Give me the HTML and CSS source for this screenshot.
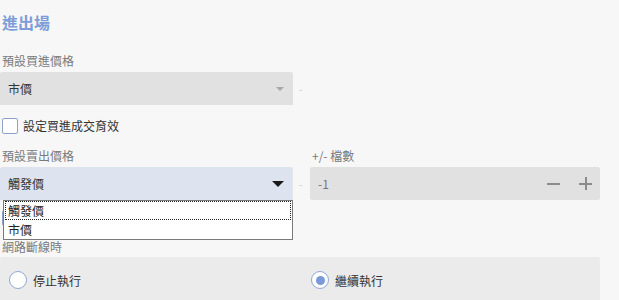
FILE: index.html
```html
<!DOCTYPE html>
<html lang="zh-Hant">
<head>
    <meta charset="UTF-8">
    <meta name="viewport" content="width=device-width, initial-scale=1.0">
    <title>進出場</title>
    <link rel="stylesheet" href="styles.css">
</head>
<body>
    <!-- Entry / Exit section -->
    <div class="section">
        <h2 class="title">進出場</h2>

        <div class="field-label">預設買進價格</div>
        <div class="row">
            <div class="select">
                <span>市價</span>
                <span class="caret caret-gray"></span>
            </div>
            <span class="dash">-</span>
        </div>

        <label class="check-row">
            <span class="checkbox"></span>
            <span>設定買進成交育效</span>
        </label>

        <div class="grid">
            <div class="col">
                <div class="field-label">預設賣出價格</div>
                <div class="row">
                    <div class="select select-open">
                        <span>觸發價</span>
                        <span class="caret caret-dark"></span>
                    </div>
                    <span class="dash">-</span>
                </div>

                <!-- opened option list -->
                <div class="dropdown">
                    <div class="option option-focus">觸發價</div>
                    <div class="option">市價</div>
                </div>

                <!-- checkbox hidden under the open list -->
                <div class="check-row check-hidden">
                    <span class="checkbox"></span>
                </div>
            </div>
            <div class="col">
                <div class="field-label">+/- 檔數</div>
                <div class="stepper">
                    <span>-1</span>
                    <span class="step-btns">
                        <span class="minus"></span>
                        <span class="plus"></span>
                    </span>
                </div>
            </div>
        </div>

        <div class="field-label label-net">網路斷線時</div>
        <div class="radio-box">
            <label class="radio-item">
                <span class="radio"></span>
                <span>停止執行</span>
            </label>
            <label class="radio-item">
                <span class="radio radio-on"></span>
                <span>繼續執行</span>
            </label>
        </div>
    </div>
</body>
</html>
```

FILE: styles.css
```css
body {
    margin: 0;
    padding: 0;
    background-color: #f7f7f7;
    font-family: "Noto Sans CJK TC", "Noto Sans", sans-serif;
    font-size: 12px;
    color: #333;
    overflow: hidden;
}

.section {
    width: 600px;
    padding-top: 12px;
}

.title {
    margin: 0 0 0 2px;
    font-size: 16px;
    line-height: 20px;
    font-weight: bold;
    color: #7d9cd9;
}

.field-label {
    margin: 21px 0 3px 2px;
    line-height: 16px;
    color: #7a7a7a;
}

.grid .field-label {
    margin-top: 14px;
}

.row {
    display: flex;
    align-items: center;
}

.select {
    width: 293px;
    height: 33px;
    box-sizing: border-box;
    padding: 0 8px;
    display: flex;
    align-items: center;
    justify-content: space-between;
    background-color: #e1e1e1;
    border-radius: 2px 2px 0 0;
    color: #333;
}

.select-open {
    background-color: #dde3ef;
}

.caret {
    width: 0;
    height: 0;
    margin-right: 1px;
}

.caret-gray {
    border-left: 4px solid transparent;
    border-right: 4px solid transparent;
    border-top: 4px solid #a8a8a8;
    margin-right: 1px;
}

.caret-dark {
    border-left: 6px solid transparent;
    border-right: 6px solid transparent;
    border-top: 6px solid #1a1a1a;
}

.dash {
    margin-left: 6px;
    color: #c8c8c8;
    font-size: 10px;
}

.check-row {
    display: flex;
    align-items: center;
    gap: 5px;
    margin: 13px 0 0 2px;
    line-height: 16px;
}

.checkbox {
    width: 14px;
    height: 14px;
    border: 1px solid #8fa3c7;
    border-radius: 2px;
    background-color: #fff;
}

.grid {
    display: grid;
    grid-template-columns: 310px 290px;
}

.col {
    position: relative;
}

.dropdown {
    position: absolute;
    top: 66px;
    left: 3px;
    width: 290px;
    box-sizing: border-box;
    border: 1px solid #7a7a7a;
    background-color: #fff;
    padding: 0 1px;
    z-index: 2;
}

.option {
    height: 19px;
    line-height: 19px;
    padding-left: 3px;
    color: #222;
}

.option-focus {
    outline: 1px dotted #222;
    outline-offset: -1px;
}

.check-hidden {
    margin-top: 10px;
    height: 16px;
}

.stepper {
    height: 33px;
    box-sizing: border-box;
    padding: 0 8px;
    display: flex;
    align-items: center;
    justify-content: space-between;
    background-color: #e1e1e1;
    border-radius: 2px;
    color: #777;
}

.step-btns {
    display: flex;
    align-items: center;
    gap: 19px;
}

.minus, .plus {
    position: relative;
    width: 13px;
    height: 13px;
}

.minus::before, .plus::before, .plus::after {
    content: "";
    position: absolute;
    background-color: #8c8c8c;
}

.minus::before, .plus::before {
    left: 0;
    top: 6px;
    width: 13px;
    height: 1.5px;
}

.plus::after {
    left: 6px;
    top: 0;
    width: 1.5px;
    height: 13px;
}

.label-net {
    margin-top: 13px;
    margin-bottom: 2px;
}

.radio-box {
    display: grid;
    grid-template-columns: 310px 290px;
    height: 46px;
    margin-top: 0;
    background-color: #ebebeb;
    border-radius: 2px;
}

.radio-item {
    display: flex;
    align-items: center;
    gap: 6px;
    padding-left: 9px;
    color: #333;
}

.radio-item + .radio-item {
    padding-left: 1px;
}

.radio {
    width: 16px;
    height: 16px;
    border: 1.5px solid #8fa8d8;
    border-radius: 50%;
    background-color: #fff;
    position: relative;
}

.radio-on::after {
    content: "";
    position: absolute;
    left: 3.5px;
    top: 3.5px;
    width: 9px;
    height: 9px;
    border-radius: 50%;
    background-color: #7d9ad8;
}
```
